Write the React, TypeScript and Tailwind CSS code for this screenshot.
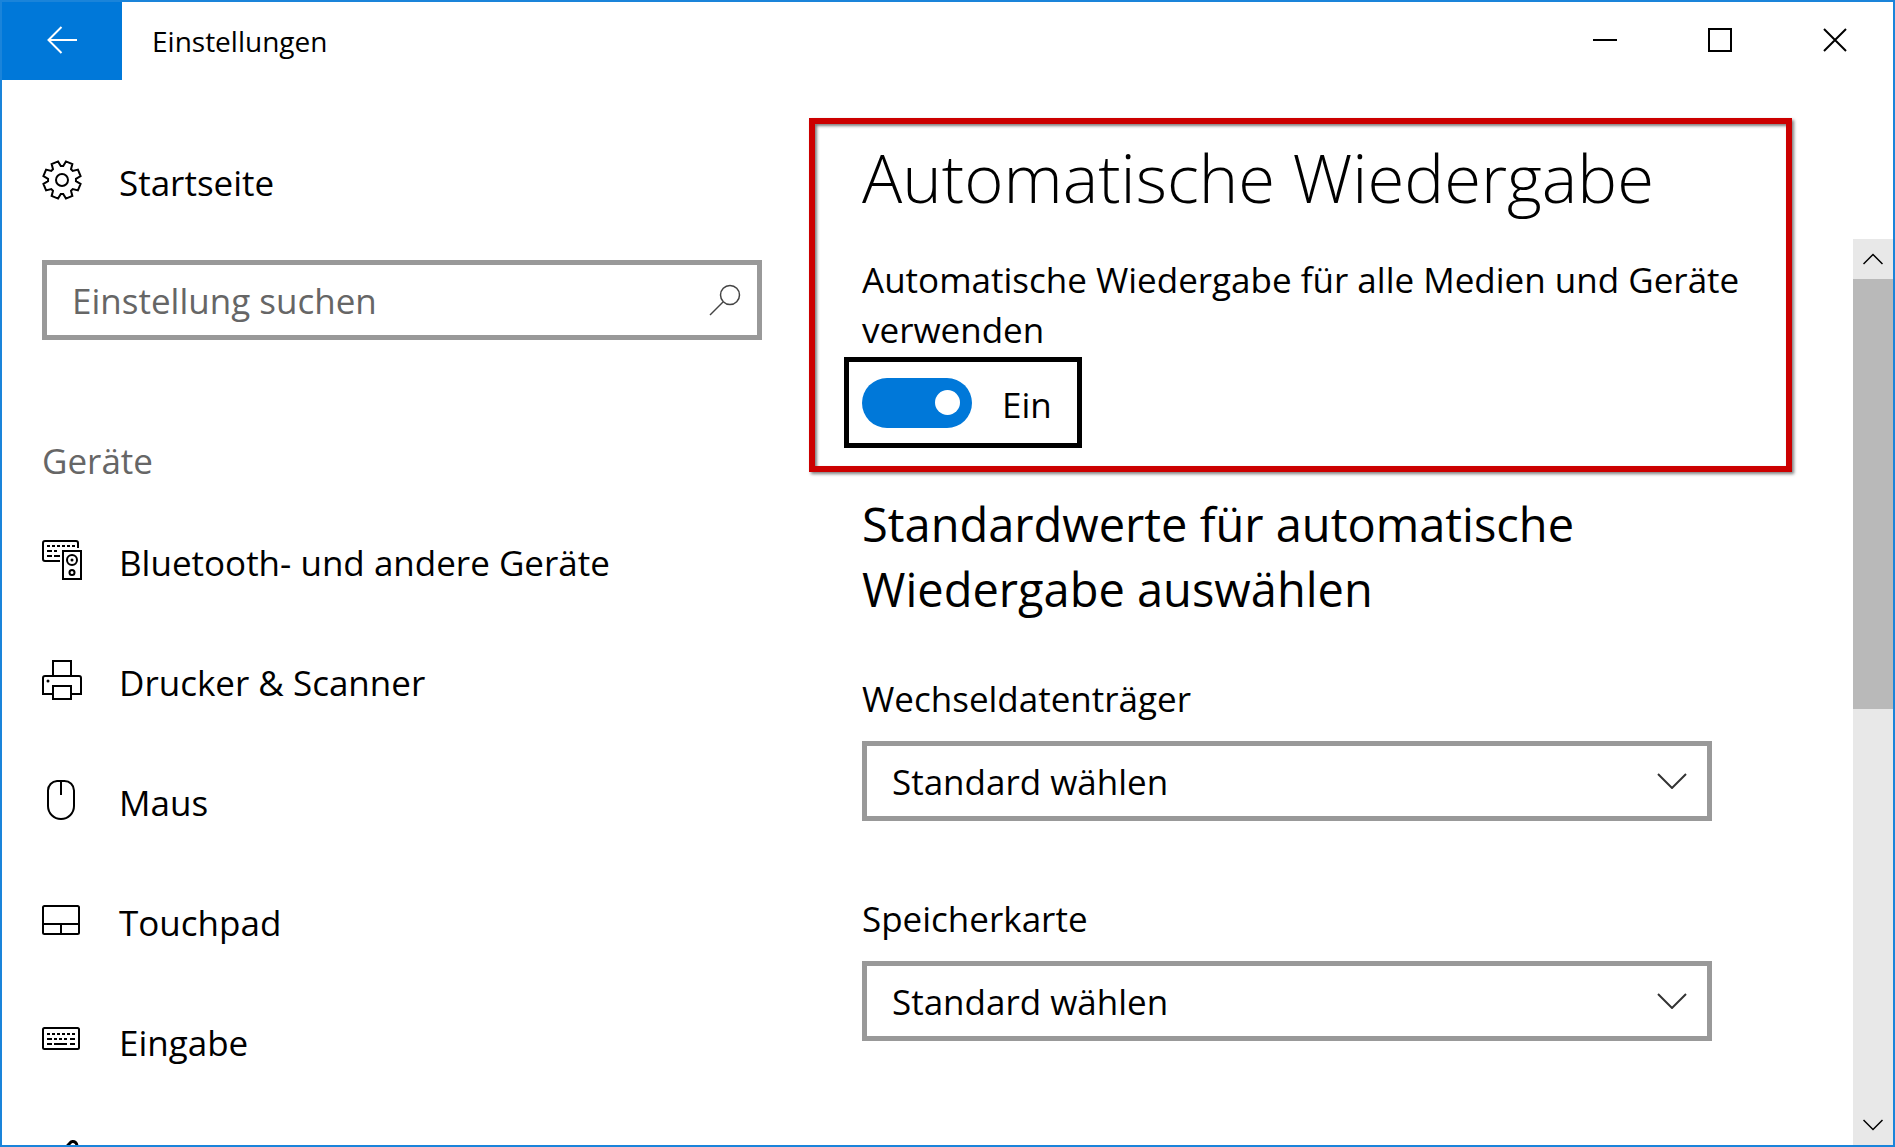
import { useState } from "react";
import type { ReactNode } from "react";

interface NavItem {
  label: string;
  icon: ReactNode;
}

interface AutoplaySelectProps {
  id: string;
  label: string;
}

// Eight teeth with a notch pointing straight up
const gearPath = (() => {
  const points: string[] = [];
  const add = (angle: number, radius: number) => {
    const rad = (angle * Math.PI) / 180;
    points.push(`${(20 + radius * Math.sin(rad)).toFixed(2)} ${(20 - radius * Math.cos(rad)).toFixed(2)}`);
  };
  for (let i = 0; i < 8; i++) {
    const base = i * 45;
    add(base - 5, 14);
    add(base + 5, 14);
    add(base + 12, 19);
    add(base + 33, 19);
  }
  return `M${points.join("L")}Z`;
})();

function Icon({ children }: { children: ReactNode }) {
  return (
    <svg
      className="w-10 h-10 shrink-0"
      viewBox="0 0 40 40"
      fill="none"
      stroke="currentColor"
      strokeWidth="2"
      aria-hidden="true"
    >
      {children}
    </svg>
  );
}

const navItems: NavItem[] = [
  {
    label: "Bluetooth- und andere Geräte",
    icon: (
      <Icon>
        <path d="M18 21H3a2 2 0 0 1-2-2V3a2 2 0 0 1 2-2h31a2 2 0 0 1 2 2v5" />
        <path d="M5 6h28" strokeDasharray="3 2" />
        <path d="M5 11h5M12 11h3M5 16h5M12 16h6" />
        <path d="M21 11h18v28H21z" />
        <circle cx="30" cy="20" r="5" />
        <circle cx="30" cy="20" r="1.5" fill="currentColor" stroke="none" />
        <circle cx="30" cy="32.5" r="2.5" />
      </Icon>
    ),
  },
  {
    label: "Drucker & Scanner",
    icon: (
      <Icon>
        <path d="M11 16V1h18v15" />
        <path d="M11 34H1V18a2 2 0 0 1 2-2h34a2 2 0 0 1 2 2v16H29" />
        <path d="M11 26h18v13H11z" />
        <circle cx="6" cy="21" r="1.5" fill="currentColor" stroke="none" />
      </Icon>
    ),
  },
  {
    label: "Maus",
    icon: (
      <Icon>
        <path d="M15 1h7.5a9.5 9.5 0 0 1 9.5 9.5V26a13 13 0 0 1-26 0V10.5A9.5 9.5 0 0 1 15 1z" />
        <path d="M19 1v14" />
      </Icon>
    ),
  },
  {
    label: "Touchpad",
    icon: (
      <Icon>
        <rect x="1" y="6" width="36" height="28" rx="1.5" />
        <path d="M1 24h36M19 24v10" />
      </Icon>
    ),
  },
  {
    label: "Eingabe",
    icon: (
      <Icon>
        <rect x="1" y="8" width="36" height="21" rx="1.5" />
        <path d="M5 14h28" strokeDasharray="3 2" />
        <path d="M5 19h5M12 19h3M17 19h3M22 19h3M28 19h5" />
        <path d="M5 24h5M12 24h13M28 24h5" />
      </Icon>
    ),
  },
];

function AutoplaySelect({ id, label }: AutoplaySelectProps) {
  return (
    <div>
      <label htmlFor={id} className="block leading-[50px]">
        {label}
      </label>
      <div className="grid items-center mt-[17px]">
        <select
          id={id}
          className="col-start-1 row-start-1 w-full h-20 appearance-none border-[5px] border-[#999999] bg-white pt-0.5 pl-[25px] pr-20 outline-none"
        >
          <option>Standard wählen</option>
        </select>
        <svg
          className="col-start-1 row-start-1 justify-self-end mr-6 w-8 h-4 pointer-events-none"
          viewBox="0 0 32 16"
          fill="none"
          stroke="#333333"
          strokeWidth="2"
          aria-hidden="true"
        >
          <path d="M2 1l14 14L30 1" />
        </svg>
      </div>
    </div>
  );
}

export default function App() {
  const [enabled, setEnabled] = useState(true);

  return (
    <div className="flex flex-col h-screen overflow-hidden border-2 border-[#1a84da] bg-white text-black text-[35px] font-['Open_Sans','Noto_Sans',sans-serif]">
      {/* Title bar */}
      <header className="flex shrink-0 h-[78px]">
        <button type="button" aria-label="Zurück" className="flex items-center justify-center w-[120px] pb-0.5 bg-[#0078d9]">
          <svg className="w-[30px] h-7" viewBox="0 0 30 28" fill="none" stroke="white" strokeWidth="2">
            <path d="M30 14H2M14.5 1L1.5 14l13 13" />
          </svg>
        </button>
        <div className="flex-1 flex items-center pl-[30px] text-[28px]">Einstellungen</div>
        <button type="button" aria-label="Minimieren" className="flex items-center justify-center w-[115px] pb-0.5 pr-0.5">
          <svg className="w-6 h-6" viewBox="0 0 24 24" stroke="black" strokeWidth="2">
            <path d="M0 12h24" />
          </svg>
        </button>
        <button type="button" aria-label="Maximieren" className="flex items-center justify-center w-[115px] pb-0.5 pr-0.5">
          <svg className="w-6 h-6" viewBox="0 0 24 24" fill="none" stroke="black" strokeWidth="2">
            <path d="M1 1h22v22H1z" />
          </svg>
        </button>
        <button type="button" aria-label="Schließen" className="flex items-center justify-center w-[115px] pb-0.5 pr-0.5">
          <svg className="w-6 h-6" viewBox="0 0 24 24" stroke="black" strokeWidth="2">
            <path d="M1 1l22 22M23 1L1 23" />
          </svg>
        </button>
      </header>

      <div className="flex flex-1 min-h-0">
        {/* Sidebar */}
        <aside className="w-[760px] shrink-0 overflow-hidden pl-10 pt-10">
          <a href="#start" className="flex items-center gap-[37px] h-[120px]">
            <Icon>
              <path d={gearPath} />
              <circle cx="20" cy="20" r="6" />
            </Icon>
            <span className="pt-1.5">Startseite</span>
          </a>

          <label className="flex items-center h-20 mt-5 pl-[25px] pr-4 border-[5px] border-[#999999]">
            <input
              type="text"
              aria-label="Einstellung suchen"
              placeholder="Einstellung suchen"
              className="flex-1 min-w-0 pt-0.5 outline-none placeholder:text-[#666666] placeholder:opacity-100"
            />
            <svg
              className="w-8 h-8"
              viewBox="0 0 32 32"
              fill="none"
              stroke="#444444"
              strokeWidth="1.5"
              aria-hidden="true"
            >
              <circle cx="21" cy="11" r="9.5" />
              <path d="M14 18L1 31" />
            </svg>
          </label>

          <h2 className="mt-24 mb-[14px] leading-[50px] text-[#666666]">Geräte</h2>

          <nav>
            {navItems.map((item) => (
              <a key={item.label} href="#" className="flex items-center gap-[37px] h-[120px]">
                {item.icon}
                <span className="pt-1.5">{item.label}</span>
              </a>
            ))}
            <a href="#" className="flex items-center h-[120px]">
              <Icon>
                <path d="M4 37l3-11L28 3a3.5 3.5 0 0 1 6 5L13 32z" strokeWidth="3" />
              </Icon>
            </a>
          </nav>
        </aside>

        {/* Content */}
        <main className="flex-1 min-w-0 overflow-hidden pt-[38px] pl-[47px] pr-[61px]">
          <section className="border-[6px] border-[#cc0000] pt-3 pb-[18px] pl-[47px] shadow-[2px_2px_3px_rgba(0,0,0,0.5),inset_2px_2px_3px_rgba(0,0,0,0.5)]">
            <h1 className="text-[67px] leading-[82px] font-light">Automatische Wiedergabe</h1>
            <p id="autoplay-text" className="mt-[37px] leading-[50px]">
              Automatische Wiedergabe für alle Medien und Geräte verwenden
            </p>
            <div className="flex items-center w-fit h-[91px] mt-0.5 -ml-[18px] pl-[13px] pr-[25px] gap-[30px] border-[5px] border-black">
              <input
                id="autoplay"
                type="checkbox"
                role="switch"
                aria-describedby="autoplay-text"
                checked={enabled}
                onChange={(e) => setEnabled(e.target.checked)}
                className="flex items-center appearance-none w-[110px] h-[50px] px-3 rounded-full bg-[#999999] checked:bg-[#0078d9] checked:justify-end before:w-[25px] before:h-[25px] before:rounded-full before:bg-white"
              />
              <label htmlFor="autoplay" className="pt-1.5">
                {enabled ? "Ein" : "Aus"}
              </label>
            </div>
          </section>

          <div className="pl-[53px] pr-20">
            <h2 className="mt-5 mb-[52px] text-[47px] leading-[65px]">
              Standardwerte für automatische Wiedergabe auswählen
            </h2>
            <div className="flex flex-col gap-[73px]">
              <AutoplaySelect id="removable" label="Wechseldatenträger" />
              <AutoplaySelect id="memory-card" label="Speicherkarte" />
            </div>
          </div>
        </main>

        {/* Scrollbar */}
        <div className="flex flex-col w-10 mt-[159px] bg-[#e8e8e8]">
          <button type="button" aria-label="Nach oben" className="flex items-center justify-center h-10 shrink-0">
            <svg className="w-5 h-3" viewBox="0 0 20 12" fill="none" stroke="black" strokeWidth="1.5">
              <path d="M.5 11L10 1.5l9.5 9.5" />
            </svg>
          </button>
          <div className="flex-1 min-h-0">
            <div className="h-[52%] bg-[#b9b9b9]" />
          </div>
          <button type="button" aria-label="Nach unten" className="flex items-center justify-center h-10 shrink-0">
            <svg className="w-5 h-3" viewBox="0 0 20 12" fill="none" stroke="black" strokeWidth="1.5">
              <path d="M.5 1L10 10.5L19.5 1" />
            </svg>
          </button>
        </div>
      </div>
    </div>
  );
}
